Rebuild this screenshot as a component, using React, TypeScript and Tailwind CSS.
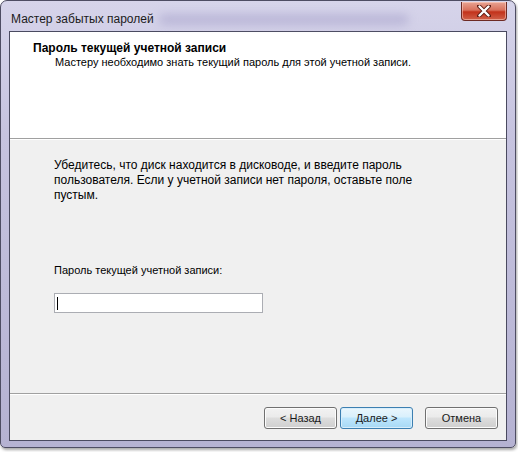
const font = "font-['Liberation_Sans',Arial,sans-serif]";

function DialogButton({ label, primary }: { label: string; primary?: boolean }) {
  return (
    <button
      className={`flex h-[22px] w-[73px] items-center justify-center rounded-[3px] border text-[11px] text-[#1a1a1a] ${
        primary
          ? "border-[#3c7fb1] bg-[linear-gradient(#eaf6fd_0%,#d9f0fc_45%,#bee6fd_50%,#a7d9f5_100%)] shadow-[inset_0_0_0_1px_#d8eefb]"
          : "border-[#707070] bg-[linear-gradient(#f2f2f2_0%,#ebebeb_45%,#dddddd_50%,#cfcfcf_100%)] shadow-[inset_0_0_0_1px_#fcfcfc]"
      }`}
    >
      {label}
    </button>
  );
}

function CloseButton() {
  return (
    <div className="flex h-[19px] w-[46px] items-center justify-center rounded-b-[4px] border border-t-0 border-[#6d2a24] bg-[linear-gradient(#e8a493_0%,#d8705c_45%,#c2321b_55%,#d0614a_100%)] shadow-[inset_0_0_0_1px_rgba(255,220,210,0.5)]">
      <svg width="14" height="12" viewBox="0 0 14 12">
        <path
          d="M2 1 L12 11 M12 1 L2 11"
          stroke="#5a1a12"
          strokeWidth="4"
          strokeLinecap="round"
          fill="none"
        />
        <path
          d="M2.5 1.5 L11.5 10.5 M11.5 1.5 L2.5 10.5"
          stroke="#ffffff"
          strokeWidth="2.4"
          strokeLinecap="round"
          fill="none"
        />
      </svg>
    </div>
  );
}

export default function App() {
  return (
    <div className={`h-[452px] w-[518px] overflow-hidden bg-white ${font}`}>
      <div className="flex h-[448px] w-[516px] flex-col rounded-t-[7px] rounded-b-[5px] border border-[#4e4d63] bg-[linear-gradient(#d6d4ea_0%,#c6c3df_30%,#b5b2d2_100%)] px-[8px] pb-[6px] shadow-[1px_2px_3px_rgba(0,0,0,0.35)]">
        <div className="relative flex h-[30px] shrink-0 items-start justify-between">
          <div className="pointer-events-none absolute left-[150px] top-[13px] h-[11px] w-[250px] rounded-full bg-[#a29dc8] opacity-50 blur-[5px]" />
          <span className="relative ml-[2px] mt-[11px] text-[12px] leading-[14px] text-[#1b1b1b]">
            Мастер забытых паролей
          </span>
          <div className="relative mt-[1px]">
            <CloseButton />
          </div>
        </div>

        <div className="flex flex-1 flex-col border border-[#4a4a60] bg-[#f0f0f0]">
          <div className="h-[107px] shrink-0 border-b border-[#a0a0a0] bg-white pl-[23px] pt-[9px]">
            <p className="text-[12px] font-bold leading-[14px] text-black">
              Пароль текущей учетной записи
            </p>
            <p className="pl-[22px] pt-[1px] text-[11px] leading-[13px] text-black">
              Мастеру необходимо знать текущий пароль для этой учетной записи.
            </p>
          </div>

          <div className="flex-1 border-t border-white pl-[44px] pt-[18px]">
            <p className="w-[370px] text-[12px] leading-[15px] text-black">
              Убедитесь, что диск находится в дисководе, и введите пароль
              пользователя. Если у учетной записи нет пароля, оставьте поле
              пустым.
            </p>
            <p className="pt-[60px] text-[11px] leading-[15px] text-black">
              Пароль текущей учетной записи:
            </p>
            <div className="mt-[15px] flex h-[20px] w-[209px] items-center border border-[#abadb3] bg-white pl-[2px]">
              <div className="h-[13px] w-px bg-black" />
            </div>
          </div>

          <div className="h-[47px] shrink-0 border-t border-[#a0a0a0]">
            <div className="flex h-full items-start border-t border-white pl-[254px] pt-[12px]">
              <DialogButton label="< Назад" />
              <div className="ml-[3px]">
                <DialogButton label="Далее >" primary />
              </div>
              <div className="ml-[12px]">
                <DialogButton label="Отмена" />
              </div>
            </div>
          </div>
        </div>
      </div>
    </div>
  );
}
